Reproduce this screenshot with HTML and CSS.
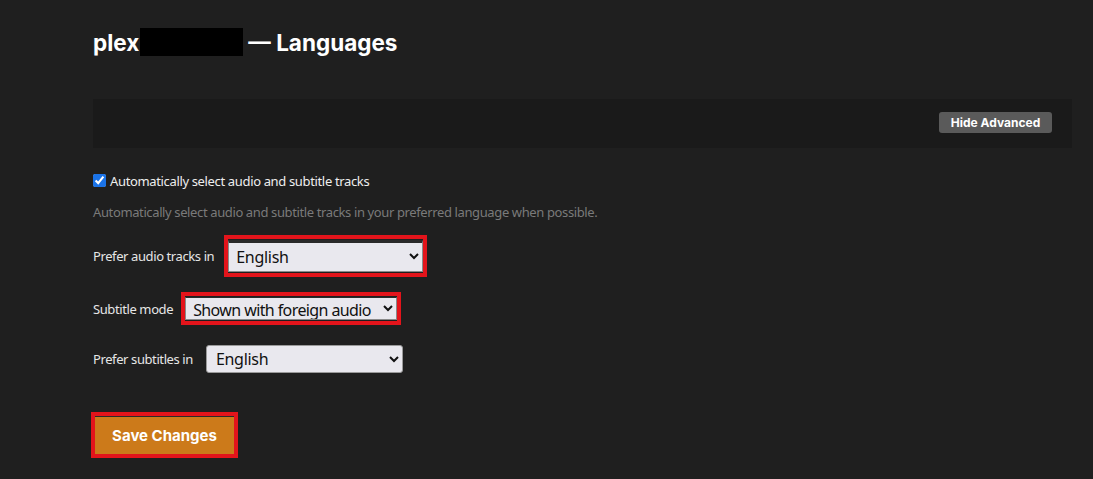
FILE: index.html
```html
<!DOCTYPE html>
<html>
<head>
<meta charset="utf-8">
<link rel="stylesheet" href="styles.css">
</head>
<body>
<div class="page">
  <h1 class="title"><span>plex</span><span class="redact"></span><span>— Languages</span></h1>
  <div class="toolbar">
    <button class="btn-adv">Hide Advanced</button>
  </div>
  <div class="form">
    <label class="check-row">
      <input type="checkbox" checked>
      <span>Automatically select audio and subtitle tracks</span>
    </label>
    <p class="help">Automatically select audio and subtitle tracks in your preferred language when possible.</p>
    <div class="row row-audio">
      <span class="lbl">Prefer audio tracks in</span>
      <span class="mark">
        <select class="sel sel-audio"><option>English</option></select>
      </span>
    </div>
    <div class="row row-mode">
      <span class="lbl">Subtitle mode</span>
      <span class="mark">
        <select class="sel sel-mode"><option>Shown with foreign audio</option></select>
      </span>
    </div>
    <div class="row row-subs">
      <span class="lbl">Prefer subtitles in</span>
      <select class="sel sel-subs plain"><option>English</option></select>
    </div>
    <div class="save-wrap">
      <span class="mark mark-save"><button class="btn-save">Save Changes</button></span>
    </div>
  </div>
</div>
</body>
</html>
```
FILE: styles.css
```css
html, body {
  margin: 0;
  padding: 0;
  background: #1f1f1f;
  height: 100%;
}
body {
  font-family: "Noto Sans", "Open Sans", sans-serif;
  color: #eeeeee;
}
.page {
  padding: 28px 21px 0 93px;
}
.title {
  margin: 0;
  height: 28px;
  display: flex;
  align-items: center;
  font-family: Inter, "Lato", sans-serif;
  font-weight: 700;
  font-size: 22.5px;
  color: #ffffff;
}
.redact {
  display: inline-block;
  width: 103px;
  height: 28px;
  background: #000;
  margin: 0 5px 0 1px;
}
.toolbar {
  margin-top: 43px;
  height: 49px;
  background: #1a1a1a;
  display: flex;
  align-items: center;
  justify-content: flex-end;
  padding-right: 20px;
}
.btn-adv {
  height: 21px;
  width: 113px;
  border: 0;
  border-radius: 3px;
  background: #5a5a5a;
  color: #fff;
  font-family: Inter, "Lato", sans-serif;
  font-weight: 700;
  font-size: 12px;
  padding: 0;
  margin-top: -2px;
}
.form {
  padding-top: 24px;
}
.check-row {
  display: flex;
  align-items: center;
  font-size: 13px;
  letter-spacing: -0.35px;
  color: #eeeeee;
  height: 17px;
}
.check-row input {
  margin: 0 4px 0 0;
  width: 13px;
  height: 13px;
  accent-color: #1a73e8;
}
.help {
  margin: 15px 0 0;
  font-size: 13px;
  letter-spacing: -0.38px;
  color: #7a7a7a;
  line-height: 17px;
}
.row {
  display: flex;
  align-items: center;
  font-size: 13px;
  letter-spacing: -0.4px;
  color: #e6e6e6;
}
.row-audio { margin-top: 14px; }
.row-mode { margin-top: 15px; }
.row-subs { margin-top: 20px; }
.lbl { margin-right: 10px; }
.row-mode .lbl { margin-right: 8px; }
.row-subs .lbl { margin-right: 13px; }
.mark {
  display: inline-flex;
  border: 4px solid #e3141b;
  padding: 1px 0;
}
.sel {
  font-family: "Noto Sans", "Open Sans", sans-serif;
  font-size: 16px;
  letter-spacing: -0.3px;
  color: #111;
  background: #e9e8ee;
  border: 1px solid #8a8a8a;
  border-top: 3px solid #2a2a2a;
  border-radius: 0;
  padding: 0 3px;
  margin: 0;
}
.sel-audio { width: 195px; height: 32px; }
.sel-mode { width: 212px; height: 23px; border-top-width: 1px; letter-spacing: -0.6px; }
.sel-subs.plain {
  width: 197px;
  height: 28px;
  border: 1px solid #9a9a9a;
  border-radius: 3px;
  padding: 0 5px;
}
.save-wrap {
  margin-top: 39px;
}
.mark-save {
  margin-left: -2px;
  padding: 0;
}
.btn-save {
  width: 139px;
  height: 38px;
  border: 0;
  border-top: 1px solid #2a2a2a;
  background: #cc7a1a;
  color: #fff;
  font-family: Inter, "Lato", sans-serif;
  font-weight: 700;
  font-size: 15px;
  padding: 0;
}
```
